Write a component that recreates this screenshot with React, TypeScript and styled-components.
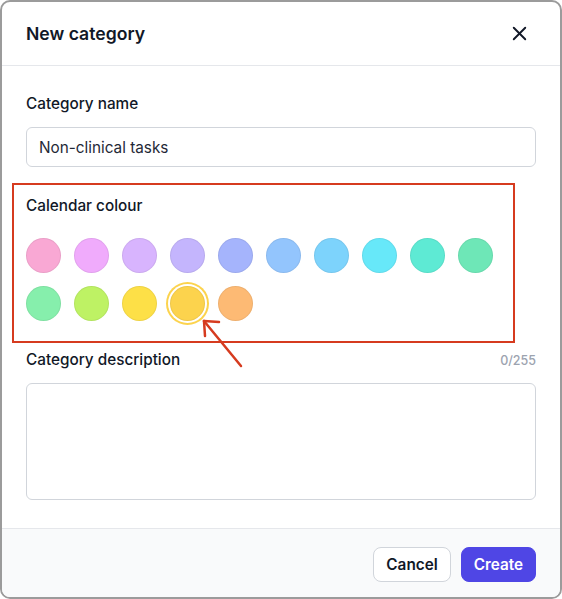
import React, { useState } from "react";
import styled, { createGlobalStyle } from "styled-components";
import { X } from "lucide-react";

const GlobalStyle = createGlobalStyle`
  * { box-sizing: border-box; }
  body {
    margin: 0;
    background: #ffffff;
    font-family: Inter, "Noto Sans", "Liberation Sans", sans-serif;
    -webkit-font-smoothing: antialiased;
  }
`;

const Modal = styled.div`
  position: relative;
  width: 562px;
  height: 599px;
  border: 2px solid #9b9b9b;
  border-radius: 10px;
  background: #ffffff;
  display: flex;
  flex-direction: column;
  overflow: hidden;
`;

const Header = styled.header`
  height: 64px;
  flex-shrink: 0;
  display: flex;
  align-items: center;
  justify-content: space-between;
  padding: 0 25px 0 24px;
  border-bottom: 1px solid #e5e7eb;
`;

const Title = styled.h2`
  margin: 0;
  font-size: 17.6px;
  font-weight: 600;
  color: #111827;
`;

const CloseButton = styled.button`
  display: flex;
  align-items: center;
  justify-content: center;
  padding: 4px;
  border: none;
  background: none;
  color: #111827;
  cursor: pointer;
`;

const Body = styled.div`
  flex: 1;
  display: flex;
  flex-direction: column;
  padding: 28px 24px 28px;
`;

const Field = styled.div<{ $gap?: number }>`
  display: flex;
  flex-direction: column;
  gap: ${(p) => p.$gap ?? 13}px;
  margin-bottom: 29px;

  &:last-child {
    margin-bottom: 0;
  }
`;

const LabelRow = styled.div`
  display: flex;
  align-items: center;
  justify-content: space-between;
`;

const Label = styled.label`
  font-size: 15.3px;
  line-height: 20px;
  font-weight: 500;
  color: #111827;
`;

const Counter = styled.span`
  font-size: 12.5px;
  font-weight: 500;
  color: #9ca3af;
`;

const TextInput = styled.input`
  height: 40px;
  width: 100%;
  padding: 0 12px;
  border: 1px solid #d1d5db;
  border-radius: 6px;
  font-family: inherit;
  font-size: 15.3px;
  color: #1f2937;
  outline: none;
`;

const TextArea = styled.textarea`
  height: 117px;
  width: 100%;
  padding: 10px 12px;
  border: 1px solid #d1d5db;
  border-radius: 6px;
  font-family: inherit;
  font-size: 15px;
  resize: none;
  outline: none;
`;

const Swatches = styled.div`
  display: grid;
  grid-template-columns: repeat(10, 35px);
  column-gap: 13px;
  row-gap: 13px;
`;

const Swatch = styled.button<{ $color: string; $selected?: boolean }>`
  width: 35px;
  height: 35px;
  padding: 0;
  border-radius: 50%;
  border: 1px solid rgba(0, 0, 0, 0.06);
  background: ${(p) => p.$color};
  cursor: pointer;
  box-shadow: ${(p) =>
    p.$selected ? `0 0 0 2px #ffffff, 0 0 0 4px ${p.$color}` : "none"};
`;

const Footer = styled.footer`
  flex-shrink: 0;
  height: 69px;
  display: flex;
  align-items: flex-start;
  justify-content: flex-end;
  gap: 10px;
  padding: 18px 24px 0;
  background: #f9fafb;
  border-top: 1px solid #e5e7eb;
`;

const Button = styled.button<{ $primary?: boolean }>`
  height: 35px;
  padding: 0 12px;
  border-radius: 8px;
  font-family: inherit;
  font-size: 15.3px;
  font-weight: 600;
  cursor: pointer;
  border: 1px solid ${(p) => (p.$primary ? "#4f46e5" : "#d1d5db")};
  background: ${(p) => (p.$primary ? "#4f46e5" : "#ffffff")};
  color: ${(p) => (p.$primary ? "#ffffff" : "#111827")};
`;

const HighlightBox = styled.div`
  position: absolute;
  left: 10px;
  top: 181px;
  width: 503px;
  height: 160px;
  border: 2px solid #d63b1f;
  pointer-events: none;
`;

const ArrowSvg = styled.svg`
  position: absolute;
  left: 193px;
  top: 310px;
  pointer-events: none;
`;

const colours = [
  "#f9a8d4",
  "#f0abfc",
  "#d8b4fe",
  "#c4b5fd",
  "#a5b4fc",
  "#93c5fd",
  "#7dd3fc",
  "#67e8f9",
  "#5eead4",
  "#6ee7b7",
  "#86efac",
  "#bef264",
  "#fde047",
  "#fcd34d",
  "#fdba74",
];

export default function App() {
  const [selected, setSelected] = useState(13);
  const [name, setName] = useState("Non-clinical tasks");

  return (
    <>
      <GlobalStyle />
      <Modal>
        <Header>
          <Title>New category</Title>
          <CloseButton aria-label="Close">
            <X size={23} strokeWidth={2} />
          </CloseButton>
        </Header>

        <Body>
          <Field>
            <Label>Category name</Label>
            <TextInput value={name} onChange={(e) => setName(e.target.value)} />
          </Field>

          <Field $gap={22}>
            <Label>Calendar colour</Label>
            <Swatches>
              {colours.map((c, i) => (
                <Swatch
                  key={c}
                  $color={c}
                  $selected={i === selected}
                  onClick={() => setSelected(i)}
                />
              ))}
            </Swatches>
          </Field>

          <Field>
            <LabelRow>
              <Label>Category description</Label>
              <Counter>0/255</Counter>
            </LabelRow>
            <TextArea />
          </Field>
        </Body>

        <Footer>
          <Button>Cancel</Button>
          <Button $primary>Create</Button>
        </Footer>

        {/* annotation overlay */}
        <HighlightBox />
        <ArrowSvg width="56" height="62" viewBox="0 0 56 62">
          <g stroke="#d63b1f" strokeWidth="2.5" strokeLinecap="round" fill="none">
            <line x1="46" y1="54" x2="9" y2="9" />
            <line x1="9" y1="9" x2="24" y2="10" />
            <line x1="9" y1="9" x2="10" y2="24" />
          </g>
        </ArrowSvg>
      </Modal>
    </>
  );
}
